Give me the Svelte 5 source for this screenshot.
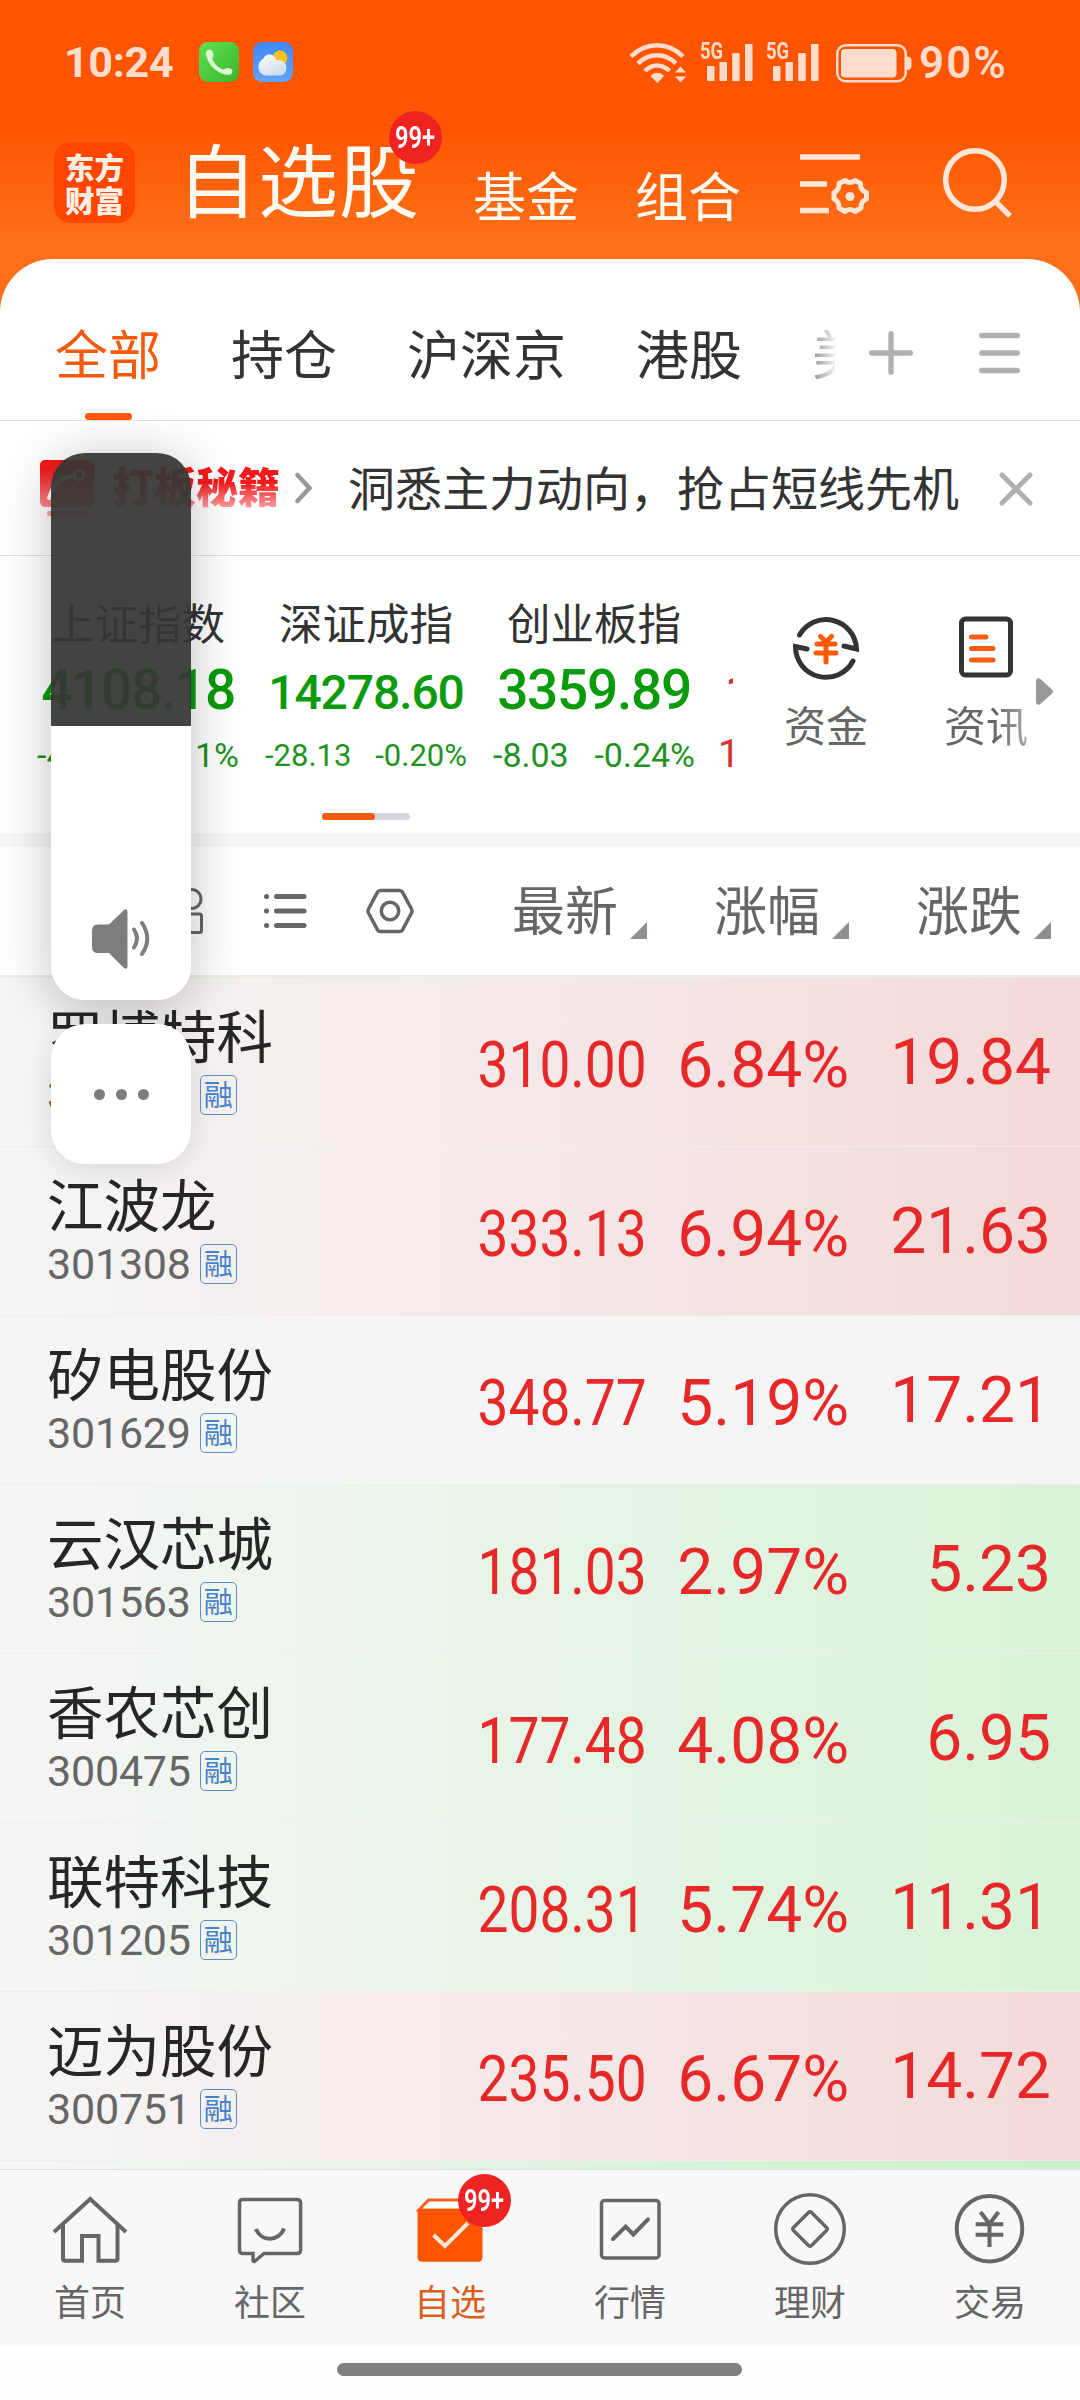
<script>
  let activeTab = $state('全部');
  let activeNav = $state('自选');
  let showBanner = $state(true);

  const tabs = ['全部', '持仓', '沪深京', '港股', '美股'];

  const indexes = [
    { name: '上证指数', value: '4108.18', change: '-4.58', percent: '-0.11%', size: '' },
    { name: '深证成指', value: '14278.60', change: '-28.13', percent: '-0.20%', size: 'small' },
    { name: '创业板指', value: '3359.89', change: '-8.03', percent: '-0.24%', size: '' },
  ];

  const columns = ['最新', '涨幅', '涨跌'];

  const stocks = [
    { name: '罗博特科', code: '300757', price: '310.00', percent: '6.84%', change: '19.84', tone: 'red' },
    { name: '江波龙', code: '301308', price: '333.13', percent: '6.94%', change: '21.63', tone: 'red' },
    { name: '矽电股份', code: '301629', price: '348.77', percent: '5.19%', change: '17.21', tone: '' },
    { name: '云汉芯城', code: '301563', price: '181.03', percent: '2.97%', change: '5.23', tone: 'green' },
    { name: '香农芯创', code: '300475', price: '177.48', percent: '4.08%', change: '6.95', tone: 'green' },
    { name: '联特科技', code: '301205', price: '208.31', percent: '5.74%', change: '11.31', tone: 'green' },
    { name: '迈为股份', code: '300751', price: '235.50', percent: '6.67%', change: '14.72', tone: 'red' },
  ];

  const navItems = ['首页', '社区', '自选', '行情', '理财', '交易'];
</script>

<main>
  <header>
    <div class="statusBar">
      <span class="time">10:24</span>
      <svg class="phoneIcon" width="40" height="40" viewBox="0 0 40 40">
        <defs>
          <linearGradient id="phoneBg" x1="0" y1="0" x2="1" y2="1">
            <stop offset="0" stop-color="#5fe052" />
            <stop offset="1" stop-color="#3db52b" />
          </linearGradient>
          <linearGradient id="cloudBg" x1="0" y1="0" x2="0" y2="1">
            <stop offset="0" stop-color="#3f86f7" />
            <stop offset="1" stop-color="#64a4f4" />
          </linearGradient>
          <linearGradient id="cloud" x1="0" y1="0" x2="0.6" y2="1">
            <stop offset="0" stop-color="#ffffff" />
            <stop offset="1" stop-color="#cfdcec" />
          </linearGradient>
        </defs>
        <rect width="40" height="40" rx="9" fill="url(#phoneBg)" />
        <path d="M7.500 9c1.500-1.300 4-1.500 5-.8 1.500 1 2.300 4.500 1.800 6-.5 1-1.300 1.300-.8 3 1.800 4.500 5.500 8.500 10.500 10.300 1.500.3 2-1 3-1.200 1.700-.3 5 0 6 1.200.8 1.500.3 3.500-.8 4.500-2 1.300-5.500 1-8.700-.3C14.500 28 8.500 21 7 12.500c-.2-1.300-.2-2.600.5-3.500z" fill="#dcf8d6" />
      </svg>
      <svg class="weatherIcon" width="40" height="40" viewBox="0 0 40 40">
        <rect width="40" height="40" rx="9" fill="url(#cloudBg)" />
        <circle cx="27" cy="16" r="7.500" fill="#fcc21b" />
        <path d="M13 33.500a8 8 0 0 1-7.500-8.500c0-4 2-7 5-8.500 1-2.500 3-4 6-4 3.500 0 6 2.500 7 6 1-.5 2-.5 3.500-.3 4 .3 6.500 3.500 6.500 7.300 0 4.500-3 8-7 8z" fill="url(#cloud)" />
      </svg>

      <svg class="wifi" width="58" height="42" viewBox="0 0 58 42" fill="none" stroke="#ffdccb" stroke-width="4.500">
        <path d="M2 14.500C17-.5 39-.5 54 14.500" />
        <path d="M9 21.500C20 10.500 36 10.500 47 21.500" />
        <path d="M16 29C23 21.500 33 21.500 40.500 29" />
        <path d="M21.500 34C25 29.500 31.500 29.500 35 34L28.300 41z" fill="#ffdccb" stroke="none" />
        <path d="M46 30.500L51.500 24.500L57 30.500zM46 34.500H57L51.500 40.500z" fill="#ffdccb" stroke="none" />
      </svg>
      {#each [1, 2] as sim}
        <div class="signal">
          <span class="fiveG">5G</span>
          <svg width="46" height="37" viewBox="0 0 46 37" fill="#ffdccb">
            <rect x="0" y="22" width="7.500" height="15" rx="1" />
            <rect x="12.500" y="18" width="7.500" height="19" rx="1" />
            <rect x="25.200" y="9" width="7.500" height="28" rx="1" />
            <rect x="38" y="0" width="7.500" height="37" rx="1" />
          </svg>
        </div>
      {/each}
      <svg class="battery" width="76" height="40" viewBox="0 0 76 40">
        <rect x="1.250" y="1.250" width="68.500" height="36" rx="8.500" fill="none" stroke="#ffdccb" stroke-width="2.500" />
        <rect x="5" y="5" width="55.500" height="28.500" rx="4" fill="#ffdccb" />
        <path d="M71 12.500c3 0 4.500 2 4.500 4v5.500c0 2-1.500 4-4.500 4z" fill="#ffdccb" />
      </svg>
      <span class="batteryText">90%</span>
    </div>

    <div class="topNav">
      <div class="logo"><span>东方</span><span>财富</span></div>
      <div class="topTitle">
        自选股
        <span class="badge"><i>99+</i></span>
      </div>
      <span class="topLink">基金</span>
      <span class="topLink">组合</span>
      <svg class="filterIcon" width="72" height="64" viewBox="0 0 72 64" fill="none" stroke="#ffe6d6" stroke-width="5.500">
        <path d="M0 6H60M0 33H27M0 59.500H29" />
        <path d="M45 29.500q5 4 10 0l5.500 3q-.5 6.500 6 9v6.500q-6 2.500-5.500 9l-6 3.500q-5-4-10 0l-6-3.500q.5-6.500-5-9v-6.500q5.500-2.500 5-9z" stroke-width="5" stroke-linejoin="round" />
        <circle cx="50" cy="45.500" r="4.500" fill="#ffe6d6" stroke="none" />
      </svg>
      <svg class="searchIcon" width="72" height="72" viewBox="0 0 72 72" fill="none" stroke="#ffe6d6" stroke-width="5.500">
        <circle cx="32" cy="33" r="29.300" />
        <path d="M52 54L67 69" />
      </svg>
    </div>
  </header>

  <section class="panel">
    <div class="tabBar">
      <div class="tabs">
        {#each tabs as tab}
          <button class="tab" class:active={tab === activeTab} onclick={() => (activeTab = tab)}>{tab}</button>
        {/each}
      </div>
      <svg width="44" height="44" viewBox="0 0 44 44" stroke="#b0b0b0" stroke-width="5.300" stroke-linecap="round">
        <path d="M2.700 22H41.300M22 2.700V41.300" />
      </svg>
      <svg width="41" height="44" viewBox="0 0 41 44" stroke="#b0b0b0" stroke-width="5.300" stroke-linecap="round">
        <path d="M2.700 4.500H38.300M2.700 22H38.300M2.700 39.500H38.300" />
      </svg>
    </div>

    {#if showBanner}
      <div class="banner">
        <svg class="bannerIcon" width="54" height="56" viewBox="0 0 54 56">
          <defs>
            <linearGradient id="redFade" x1="0" y1="0" x2="0" y2="1">
              <stop offset="0.200" stop-color="#f5191c" />
              <stop offset="1" stop-color="#fb8d8d" />
            </linearGradient>
          </defs>
          <rect width="54" height="47" rx="5" fill="url(#redFade)" />
          <rect x="7" y="51" width="40" height="5" rx="2.500" fill="#fba0a0" />
          <path d="M9 38C13 26 18 17 34 16" fill="none" stroke="#fff" stroke-width="4" stroke-linecap="round" />
          <circle cx="39" cy="15" r="5" fill="none" stroke="#fff" stroke-width="3" />
        </svg>
        <span class="bannerTitle">打板秘籍</span>
        <svg class="chevron" width="18" height="32" viewBox="0 0 18 32" fill="none" stroke="#999" stroke-width="4.500" stroke-linecap="round">
          <path d="M2.500 3L14.500 16L2.500 29" />
        </svg>
        <span class="bannerText">洞悉主力动向，抢占短线先机</span>
        <button class="close" aria-label="关闭" onclick={() => (showBanner = false)}>
          <svg width="34" height="34" viewBox="0 0 34 34" stroke="#b0b0b0" stroke-width="5" stroke-linecap="round">
            <path d="M3 3L31 31M31 3L3 31" />
          </svg>
        </button>
      </div>
    {/if}

    <div class="market">
      <div class="indexes">
        {#each indexes as item}
          <div class="index">
            <span class="indexName">{item.name}</span>
            <span class="indexValue {item.size}">{item.value}</span>
            <div class="indexChange {item.size}"><span>{item.change}</span><span>{item.percent}</span></div>
          </div>
        {/each}
        <div class="index next">
          <span class="indexName"></span>
          <span class="indexValue small">1</span>
          <div class="indexChange">1</div>
        </div>
      </div>
      <div class="shortcuts">
        <div class="shortcut">
          <svg width="70" height="70" viewBox="0 0 70 70" fill="none" stroke="#333" stroke-width="5">
            <path d="M8.500 23A30.500 30.500 0 0 1 65.500 37L53 34" stroke-linecap="round" />
            <path d="M62 49A30.500 30.500 0 0 1 4.500 34.500L16 37" stroke-linecap="round" />
            <path d="M29.500 24.500L35 30L40.500 24.500M26 32H44M25 41H45M35 31V50" stroke="#ff5a0a" stroke-linecap="round" />
          </svg>
          <span>资金</span>
        </div>
        <div class="shortcut">
          <svg width="70" height="70" viewBox="0 0 70 70" fill="none" stroke="#333" stroke-width="5">
            <rect x="10.500" y="7" width="49" height="56" rx="4" />
            <path d="M20.500 25H35M20.500 36.500H42M20.500 48H42" stroke="#f25c14" stroke-linecap="round" />
          </svg>
          <span class="fading">资讯</span>
        </div>
        <svg class="more" width="18" height="27" viewBox="0 0 18 27">
          <path d="M0 3C0 0 3-.5 5 1.500L16 11.500Q18 13.500 16 15.500L5 25.500C3 27.500 0 27 0 24z" fill="#999" />
        </svg>
      </div>
    </div>
    <div class="pager"><div class="pagerThumb"></div></div>
  </section>

  <section class="tableHead">
    <svg class="gridIcon" width="46" height="46" viewBox="0 0 46 46" fill="none" stroke="#666" stroke-width="3">
      <rect x="2" y="2" width="18" height="18" rx="2" />
      <circle cx="34.500" cy="11" r="9.500" />
      <rect x="2" y="26" width="18" height="18" rx="2" />
      <rect x="25.500" y="26" width="19" height="18.500" rx="2" />
    </svg>
    <svg class="listIcon" width="43" height="36" viewBox="0 0 43 36" stroke="#666" stroke-width="5" stroke-linecap="round">
      <path d="M2.500 3.500h.1M2.500 18h.1M2.500 32.500h.1M12.500 3.500H40M12.500 18H40M12.500 32.500H40" />
    </svg>
    <svg class="hexIcon" width="48" height="46" viewBox="0 0 48 46" fill="none" stroke="#666" stroke-width="3.500" stroke-linejoin="round">
      <path d="M14.500 2.500h19q2 0 3 1.700l9 16.800q1 2 0 4l-9 16.800q-1 1.700-3 1.700h-19q-2 0-3-1.700l-9-16.800q-1-2 0-4l9-16.800q1-1.700 3-1.700z" />
      <circle cx="24" cy="23" r="8.700" />
    </svg>
    {#each columns as column}
      <div class="column">{column}<span class="sort"></span></div>
    {/each}
  </section>

  <section class="stocks">
    {#each stocks as stock}
      <div class="stock {stock.tone}">
        <div class="stockInfo">
          <span class="stockName">{stock.name}</span>
          <div class="stockCode">{stock.code}<span class="tag">融</span></div>
        </div>
        <div class="price"><span>{stock.price}</span></div>
        <div class="percent">{stock.percent}</div>
        <div class="change">{stock.change}</div>
      </div>
    {/each}
    <div class="stock peek"></div>
  </section>

  <nav>
    {#each navItems as item, i}
      <button class="navItem" class:active={item === activeNav} onclick={() => (activeNav = item)}>
        <svg width="76" height="76" viewBox="0 0 76 76" fill="none" stroke="#666" stroke-width="4">
          {#if i === 0}
            <path d="M2 42L38.200 9L74 42" />
            <path d="M11 35V68.500Q11 70.800 13 70.800H30V46H46.500V70.800H63.500Q65.500 70.800 65.500 68.500V35" />
          {:else if i === 1}
            <path d="M11 9.500H65Q68.600 9.500 68.600 13V60Q68.600 63.500 65 63.500H32L22.500 71.500Q21 72 21 70V63.500H11Q7.500 63.500 7.500 60V13Q7.500 9.500 11 9.500z" stroke-width="3.500" />
            <path d="M24 39C29 52 47 52 52 38.500" />
          {:else if i === 2}
            <path d="M7 20L16.500 10H64V20z" fill="#fff" stroke="#f0641e" stroke-width="3" />
            <path d="M5.500 19H70.500V67Q70.500 71.700 66 71.700H10Q5.500 71.700 5.500 67z" fill="#ff5500" stroke="none" />
            <path d="M21.500 45L33 56L56 33" stroke="#ffe6d6" stroke-width="4" />
          {:else if i === 3}
            <rect x="9.500" y="10.500" width="57.500" height="57.500" rx="3" stroke-width="3.500" />
            <path d="M21 49L33.700 36.500L41.300 44.500L56 29.300" stroke-linecap="round" />
          {:else if i === 4}
            <circle cx="38" cy="39" r="34.300" stroke-width="3.500" />
            <path d="M36.500 22.500Q38 21 39.500 22.500L54.500 37.500Q56 39 54.500 40.500L39.500 55.500Q38 57 36.500 55.500L21.500 40.500Q20 39 21.500 37.500z" stroke-width="3.500" />
          {:else}
            <circle cx="37.500" cy="38.700" r="32.800" />
            <path d="M28.500 22L37.500 34L46.500 22M23.600 34.300H51.300M23.600 44.700H51.300M37.500 34V57" />
          {/if}
        </svg>
        <span>{item}</span>
        {#if i === 2}
          <span class="badge"><i>99+</i></span>
        {/if}
      </button>
    {/each}
  </nav>
  <div class="homeBar"><div></div></div>

  <!-- system volume popup -->
  <div class="volume">
    <div class="volumeEmpty"></div>
    <div class="volumeLevel">
      <svg width="60" height="60" viewBox="0 0 60 60" fill="#7d7d7d">
        <path d="M6 15.500H17L32 1Q35.500-1 35.500 3V57Q35.500 61 32 59L17 44H6Q0 44 0 38V21.500Q0 15.500 6 15.500z" />
        <path d="M42 20.500Q48 29.500 42 38.500M50 14Q60.500 29.500 50 45" fill="none" stroke="#7d7d7d" stroke-width="4" stroke-linecap="round" />
      </svg>
    </div>
  </div>
  <div class="volumeMore"><i></i><i></i><i></i></div>
</main>

<style>
  :global(body) {
    margin: 0;
    background: #fefefe;
  }

  main {
    position: relative;
    width: 1080px;
    height: 2400px;
    overflow: hidden;
    font-family: "Noto Sans CJK SC", sans-serif;
    color: #333;
  }

  button {
    border: none;
    background: none;
    padding: 0;
    font: inherit;
    color: inherit;
    position: relative;
  }

  svg {
    display: block;
    flex: none;
  }

  header {
    height: 312px;
    background: linear-gradient(#ff5500 0, #ff5500 125px, #ff6e18 235px, #ff6e18);
  }

  .statusBar {
    display: flex;
    align-items: flex-start;
    height: 84px;
    padding: 42px 0 0 64px;
    box-sizing: border-box;
    font-family: Roboto, sans-serif;
    color: #ffdccb;
  }

  .time {
    width: 135px;
    line-height: 41px;
    font-size: 43px;
    font-weight: 700;
    letter-spacing: -0.3px;
  }

  .weatherIcon {
    margin-left: 14px;
  }

  .wifi {
    margin-left: 336px;
    width: 58px;
  }

  .signal {
    position: relative;
    margin: 2px 0 0 20px;
    width: 46px;
  }

  .fiveG {
    position: absolute;
    left: -7px;
    top: -4px;
    font-size: 23px;
    line-height: 24px;
    font-weight: 700;
    transform: scaleX(0.8);
    transform-origin: left;
  }

  .battery {
    margin: 2px 0 0 17px;
  }

  .batteryText {
    margin-left: 7px;
    line-height: 43px;
    font-size: 44px;
    font-weight: 600;
    letter-spacing: 2px;
  }

  .topNav {
    display: flex;
    align-items: flex-start;
    height: 174px;
    color: #fffaf2;
  }

  .logo {
    width: 81px;
    height: 81px;
    margin: 58px 0 0 54px;
    border-radius: 17px;
    background: #ff4500;
    display: flex;
    flex-direction: column;
    align-items: center;
    justify-content: center;
    font-size: 29.5px;
    font-weight: 900;
    line-height: 33px;
    color: #ffeee4;
  }

  .topTitle {
    position: relative;
    margin: 47px 0 0 42px;
    width: 247px;
    font-size: 80px;
    line-height: 90px;
    letter-spacing: 1px;
    white-space: nowrap;
  }

  .badge {
    position: absolute;
    width: 53px;
    height: 53px;
    border-radius: 50%;
    background: #f02323;
    color: #fff;
    font-family: Roboto, sans-serif;
    font-size: 32px;
    font-weight: 600;
    line-height: 53px;
    letter-spacing: 0;
    display: flex;
    justify-content: center;
  }

  .badge i {
    font-style: normal;
    transform: scaleX(0.74);
  }

  .topTitle .badge {
    left: 212px;
    top: -20px;
  }

  .topLink {
    margin: 80px 0 0 49px;
    font-size: 53px;
    line-height: 60px;
  }

  .topLink + .topLink {
    margin-left: 56px;
  }

  .filterIcon {
    margin: 67px 0 0 59px;
  }

  .searchIcon {
    margin: 63px 0 0 71px;
  }

  .panel {
    position: relative;
    margin-top: -53px;
    height: 574px;
    background: #fff;
    border-radius: 53px 53px 0 0;
  }

  .tabBar {
    display: flex;
    align-items: center;
    height: 161px;
    border-bottom: 1px solid #e0e0e0;
    gap: 66px;
    box-sizing: content-box;
  }

  .tabBar svg {
    margin-top: 27px;
  }

  .tabs {
    display: flex;
    gap: 70px;
    width: 780px;
    height: 161px;
    padding-left: 55px;
    margin-right: -32px;
    overflow: hidden;
    mask-image: linear-gradient(to right, #000 790px, transparent 838px);
  }

  .tab {
    flex: none;
    font-size: 53px;
    padding-top: 25px;
  }

  .tab.active {
    color: #f25a0d;
  }

  .tab.active::after {
    content: "";
    position: absolute;
    left: 30px;
    bottom: 0;
    width: 47px;
    height: 7px;
    border-radius: 4px;
    background: #ff5a0a;
  }

  .banner {
    display: flex;
    align-items: center;
    height: 134px;
    padding-left: 40px;
    border-bottom: 1px solid #e0e0e0;
  }

  .bannerTitle {
    margin-left: 18px;
    font-size: 42px;
    font-weight: 900;
    line-height: 50px;
    background: linear-gradient(#f5191c 45%, #ff9c9c 95%);
    background-clip: text;
    color: transparent;
    margin-top: -6px;
  }

  .chevron {
    margin-left: 15px;
  }

  .bannerText {
    margin-left: 35px;
    font-size: 47px;
    line-height: 60px;
    width: 651px;
    margin-top: -5px;
    white-space: nowrap;
  }

  .close {
    margin-top: 1px;
  }

  .market {
    display: flex;
    height: 257px;
  }

  .indexes {
    display: flex;
    width: 709px;
    padding-left: 24px;
    overflow: hidden;
  }

  .index {
    flex: none;
    width: 228px;
    display: flex;
    flex-direction: column;
    align-items: center;
  }

  .indexName {
    margin-top: 36px;
    height: 61px;
    font-size: 43.5px;
    line-height: 60px;
  }

  .indexValue {
    font-family: Roboto, sans-serif;
    font-size: 55px;
    font-weight: 500;
    line-height: 74px;
    height: 72px;
    letter-spacing: -1.3px;
    color: #0a9a0a;
  }

  .indexValue.small {
    font-size: 48px;
    line-height: 79px;
    letter-spacing: -1.1px;
  }

  .indexChange {
    font-family: Roboto, sans-serif;
    font-size: 34px;
    line-height: 60px;
    display: flex;
    justify-content: space-between;
    width: 202px;
    color: #1f921f;
  }

  .indexChange.small {
    font-size: 31px;
    line-height: 62px;
  }

  .next {
    align-items: flex-start;
  }

  .next .indexValue,
  .next .indexChange {
    color: #d93030;
  }

  .next .indexValue {
    margin-left: 17px;
    font-weight: 500;
  }

  .next .indexChange {
    font-size: 39px;
    margin-left: 10px;
    line-height: 58px;
  }

  .shortcuts {
    display: flex;
    padding-left: 13px;
  }

  .shortcut {
    width: 160px;
    display: flex;
    flex-direction: column;
    align-items: center;
    padding-top: 56px;
    font-size: 42px;
    line-height: 60px;
    color: #666;
  }

  .shortcut span {
    margin-top: 12px;
  }

  .shortcut .fading {
    background: linear-gradient(to right, #666 60%, #aaa);
    background-clip: text;
    color: transparent;
  }

  .more {
    margin: 122px 0 0 -30px;
  }

  .pager {
    width: 88px;
    height: 7px;
    margin: 0 0 0 322px;
    border-radius: 4px;
    background: #d3d7dc;
  }

  .pagerThumb {
    width: 53px;
    height: 7px;
    border-radius: 4px;
    background: #f25a10;
  }

  .tableHead {
    display: flex;
    align-items: center;
    height: 128px;
    border-top: 14px solid #f6f7f9;
    padding-left: 157px;
    background: #fff;
    font-size: 53px;
    color: #666;
  }

  .listIcon {
    margin-left: 61px;
  }

  .hexIcon {
    margin-left: 59px;
    margin-right: 31px;
  }

  .column {
    width: 202px;
    display: flex;
    justify-content: flex-end;
    align-items: flex-end;
    line-height: 60px;
    margin-top: -6px;
  }

  .sort {
    width: 17px;
    height: 17px;
    margin: 0 0 -1px 12px;
    background: #8e8e93;
    clip-path: polygon(100% 0, 100% 100%, 0 100%);
  }

  .stocks {
    height: 1191px;
    border-top: 3px solid #eaeee8;
    background: #f4f4f4;
    overflow: hidden;
  }

  .stock {
    display: flex;
    height: 168px;
    border-bottom: 1px solid #eeeeee;
    background: #f5f5f5;
    font-family: Roboto, sans-serif;
    color: #e62828;
    font-size: 64px;
    line-height: 75px;
  }

  .stock.red {
    background: linear-gradient(to right, #f5f5f5 30px, #f4dad9);
  }

  .stock.green {
    background: linear-gradient(to right, #f5f5f5 30px, #d8f3d8);
  }

  .stock.peek {
    background: linear-gradient(to right, #f5f5f5 20px, #c9f0c9);
  }

  .stockInfo {
    width: 445px;
    padding-left: 47px;
    box-sizing: border-box;
  }

  .stockName {
    display: block;
    font-family: "Noto Sans CJK SC", sans-serif;
    font-size: 56.5px;
    line-height: 70px;
    margin-top: 20px;
    color: #262626;
  }

  .stockCode {
    display: flex;
    align-items: center;
    height: 50px;
    margin-top: 2px;
    font-size: 43px;
    line-height: 50px;
    letter-spacing: -0.2px;
    color: #666;
  }

  .tag {
    width: 35px;
    height: 38px;
    margin-left: 9px;
    border: 1.5px solid #5b8fc9;
    border-radius: 5px;
    font-family: "Noto Sans CJK SC", sans-serif;
    font-size: 29px;
    line-height: 34px;
    letter-spacing: 0;
    text-align: center;
    color: #4682c6;
  }

  .price,
  .percent,
  .change {
    width: 202px;
    padding-top: 50px;
    text-align: right;
    white-space: nowrap;
  }

  .price span {
    display: inline-block;
    transform: scaleX(0.86);
    transform-origin: right;
  }

  .change {
    padding-top: 47px;
  }

  nav {
    display: flex;
    height: 176px;
    border-top: 1px solid #e2e2e2;
    background: #f8f8fa;
    position: relative;
  }

  .navItem {
    width: 180px;
    padding-top: 20px;
    display: flex;
    flex-direction: column;
    align-items: center;
    font-size: 36px;
    line-height: 50px;
    color: #666;
  }

  .navItem > span:not(.badge) {
    margin-top: 9px;
  }

  .navItem.active {
    color: #d8601c;
  }

  .navItem .badge {
    left: 98px;
    top: 4px;
  }

  .homeBar {
    padding-top: 17px;
    background: #fefefe;
  }

  .homeBar div {
    width: 405px;
    height: 13px;
    margin-left: 337px;
    border-radius: 7px;
    background: #808080;
  }

  .volume {
    position: absolute;
    left: 51px;
    top: 453px;
    width: 140px;
    height: 547px;
    border-radius: 34px;
    overflow: hidden;
    box-shadow: 0 6px 50px rgba(0, 0, 0, 0.25);
  }

  .volumeEmpty {
    height: 273px;
    background: rgba(54, 54, 54, 0.935);
  }

  .volumeLevel {
    height: 274px;
    background: #fff;
    display: flex;
    align-items: flex-end;
    padding: 0 0 31px 41px;
    box-sizing: border-box;
  }

  .volumeMore {
    position: absolute;
    left: 51px;
    top: 1024px;
    width: 140px;
    height: 140px;
    border-radius: 34px;
    background: #fff;
    box-shadow: 0 4px 30px rgba(0, 0, 0, 0.12);
    display: flex;
    align-items: center;
    justify-content: center;
    gap: 11px;
  }

  .volumeMore i {
    width: 11px;
    height: 11px;
    border-radius: 50%;
    background: #7d7d7d;
  }
</style>
